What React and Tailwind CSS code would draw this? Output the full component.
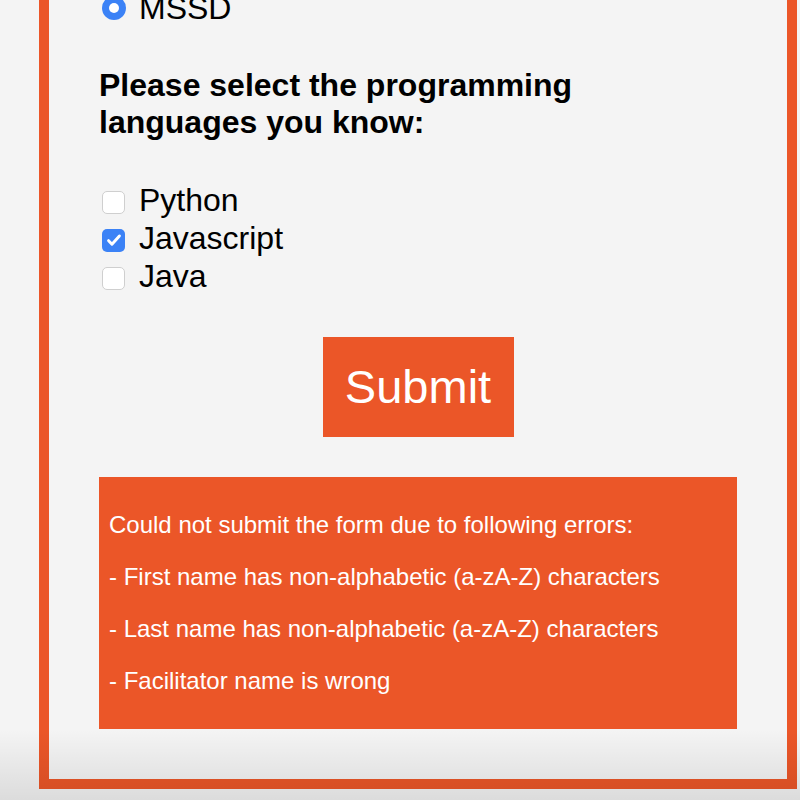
import React from 'react';

const languages = [
    { name: 'Python', checked: false },
    { name: 'Javascript', checked: true },
    { name: 'Java', checked: false },
];

const errors = [
    'Could not submit the form due to following errors:',
    '- First name has non-alphabetic (a-zA-Z) characters',
    '- Last name has non-alphabetic (a-zA-Z) characters',
    '- Facilitator name is wrong',
];

const Checkbox = ({ checked }) =>
    checked ? (
        <span className="flex items-center justify-center w-[23px] h-[23px] rounded-[5px] bg-[#3b82f6]">
            <svg width="18" height="18" viewBox="0 0 16 16" fill="none">
                <path d="M3.2 8.6l3 3.1L12.8 4.4" stroke="white" strokeWidth="2.6" strokeLinecap="round" strokeLinejoin="round" />
            </svg>
        </span>
    ) : (
        <span className="block w-[23px] h-[23px] rounded-[5px] bg-white border border-[#cfcfcf]"></span>
    );

const App = () => {
    return (
        <div className="relative h-[800px] overflow-hidden bg-[#f4f4f4] font-['Liberation_Sans',Arial,sans-serif] text-black">
            <div className="ml-[39px] mt-[-40px] w-[758px] border-[10px] border-[#eb5628] px-[50px] pb-[50px]">
                {/* Radio */}
                <div className="flex items-center h-[38px] mt-[19px]">
                    <span className="flex items-center justify-center w-[24px] h-[24px] ml-[3px] rounded-full bg-[#3b82f6]">
                        <span className="w-[10px] h-[10px] rounded-full bg-white"></span>
                    </span>
                    <span className="ml-[13px] text-[32px]">MSSD</span>
                </div>

                {/* Heading */}
                <h2 className="mt-[40px] w-[520px] text-[32px] font-bold leading-[37px]">
                    Please select the programming languages you know:
                </h2>

                {/* Checkboxes */}
                <div className="mt-[40px] flex flex-col">
                    {languages.map((lang) => (
                        <label key={lang.name} className="flex items-center h-[38px]">
                            <span className="ml-[3px] mt-[4px]">
                                <Checkbox checked={lang.checked} />
                            </span>
                            <span className="ml-[14px] text-[32px]">{lang.name}</span>
                        </label>
                    ))}
                </div>

                {/* Submit */}
                <div className="mt-[42px] flex justify-center">
                    <button className="w-[191px] h-[100px] bg-[#eb5628] text-white text-[47px]">
                        Submit
                    </button>
                </div>

                {/* Errors */}
                <div className="mt-[40px] bg-[#eb5628] p-[10px] text-white text-[24px]">
                    {errors.map((err) => (
                        <p key={err} className="my-[24px] leading-[28px]">
                            {err}
                        </p>
                    ))}
                </div>
            </div>

            <div className="pointer-events-none absolute bottom-0 left-0 right-0 h-[70px] bg-gradient-to-b from-transparent to-black/10"></div>
        </div>
    );
};

export default App;
